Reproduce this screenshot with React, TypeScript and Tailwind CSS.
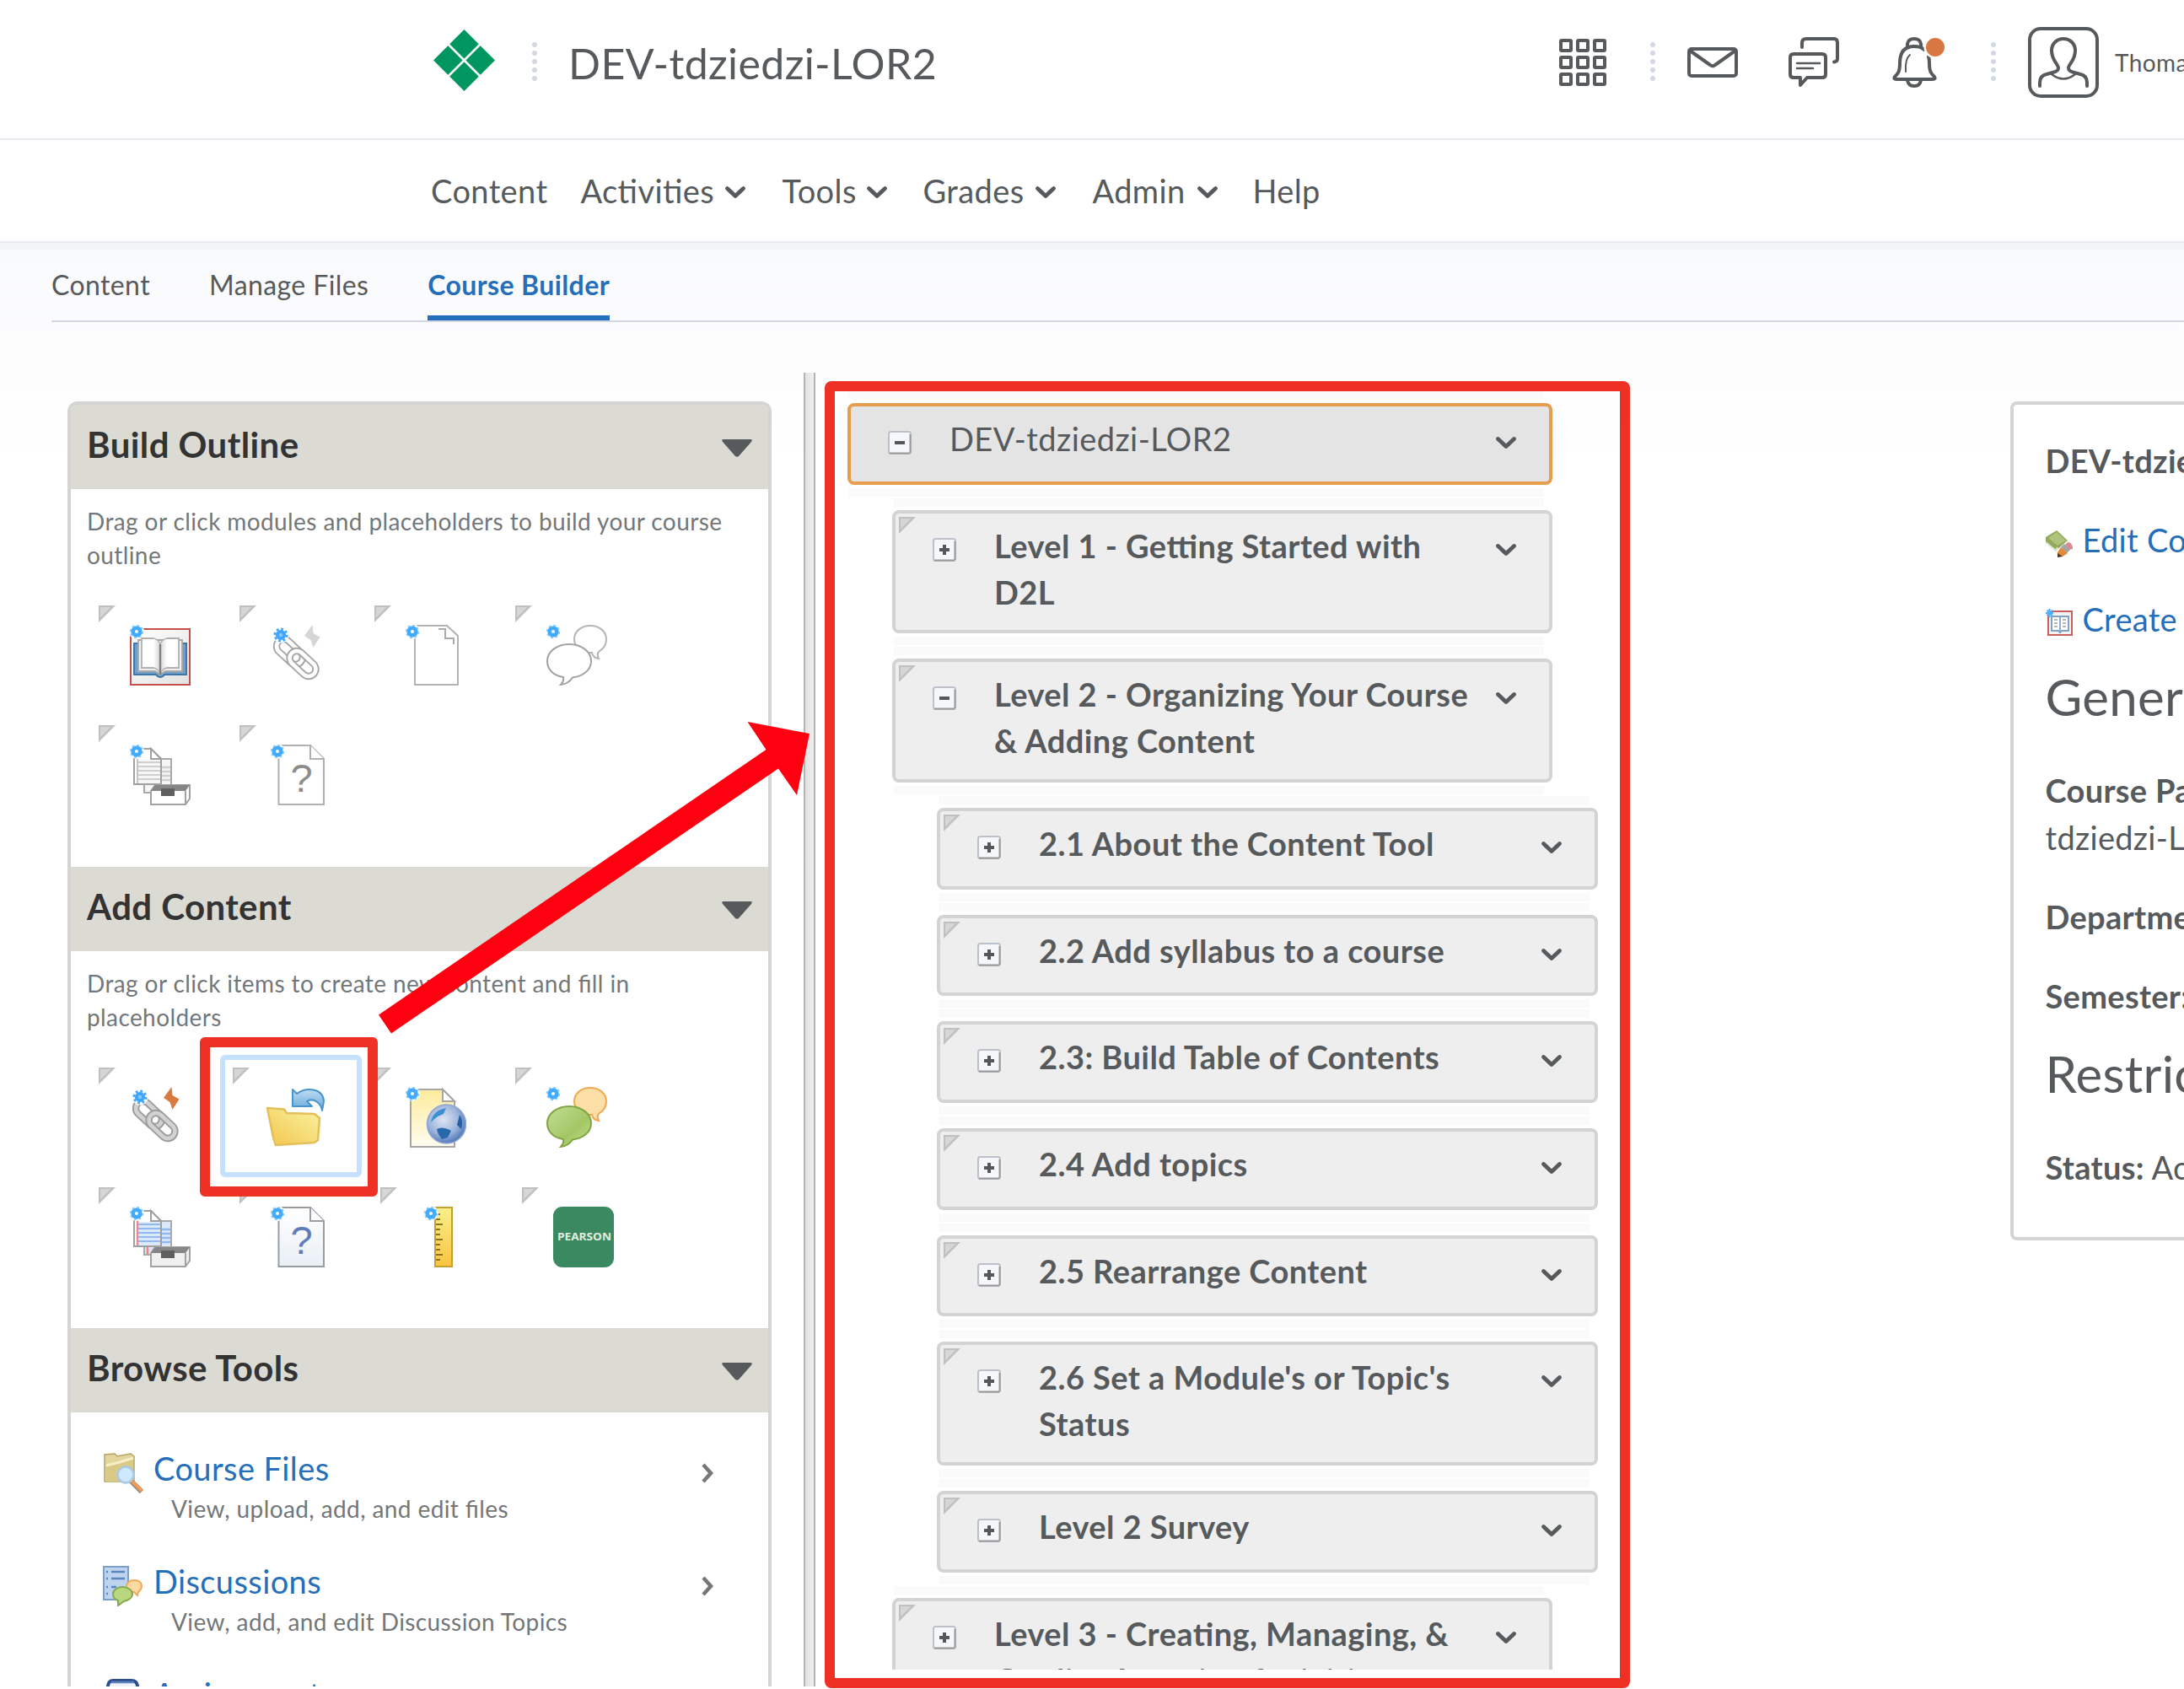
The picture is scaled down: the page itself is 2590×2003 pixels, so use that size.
import type { ReactNode } from "react";

/* ---------- shared glyphs ---------- */

function Chevron({ className = "" }: { className?: string }) {
  return (
    <svg viewBox="0 0 26 16" className={`h-4 w-[26px] shrink-0 ${className}`} fill="none" stroke="#565a5c" strokeWidth="4.800" strokeLinecap="round" strokeLinejoin="round">
      <path d="M3.5 3.5 13 12.5 22.5 3.5" />
    </svg>
  );
}

function Dots() {
  return (
    <div className="flex flex-col gap-1">
      {[0, 1, 2, 3, 4].map((i) => (
        <span key={i} className="h-1.5 w-1.5 rounded-full bg-[#d3d9e3]" />
      ))}
    </div>
  );
}

function Grip({ className = "" }: { className?: string }) {
  return (
    <svg viewBox="0 0 20 20" className={`h-5 w-5 ${className}`}>
      <path d="M0 0H20L0 20Z" fill="#c0c0c0" />
      <path d="M2 2H14.500L2 14.500Z" fill="#d6d6d6" />
    </svg>
  );
}

function Sun({ x = 8, y = 8 }: { x?: number; y?: number }) {
  return (
    <g>
      <circle cx={x} cy={y} r="9" fill="#fff" />
      <circle cx={x} cy={y} r="6.8" fill="#d3ecff" stroke="#8fcfff" strokeWidth="3" strokeDasharray="2.67 2.67" />
      <circle cx={x} cy={y} r="4.3" fill="#fff" stroke="#43abff" strokeWidth="4.600" />
    </g>
  );
}

function Svg72({ children }: { children: ReactNode }) {
  return (
    <svg viewBox="0 0 72 72" className="h-[72px] w-[72px]">
      {children}
    </svg>
  );
}

/* ---------- palette icons ---------- */

function BookIcon() {
  return (
    <Svg72>
      <defs>
        <linearGradient id="bk" x1="0" y1="0" x2="1" y2="1">
          <stop offset="0" stopColor="#fff" />
          <stop offset="1" stopColor="#e2e2e2" />
        </linearGradient>
        <linearGradient id="sp" x1="0" x2="1">
          <stop offset="0" stopColor="#fff" />
          <stop offset=".47" stopColor="#d8d8d8" />
          <stop offset=".5" stopColor="#777" />
          <stop offset=".53" stopColor="#d8d8d8" />
          <stop offset="1" stopColor="#fff" />
        </linearGradient>
      </defs>
      <rect x="1" y="5" width="70" height="66" fill="url(#bk)" stroke="#c4504c" strokeWidth="2" />
      <path d="M5 22H67V59H41Q39 62 36 62T31 59H5Z" fill="#6fa0ca" stroke="#3f76a8" strokeWidth="2" />
      <path d="M10 18H62V55H42L36 59 30 55H10Z" fill="#efefef" stroke="#a9a9a9" strokeWidth="1.8" />
      <path d="M14 16H28Q35 18 36 24 37 18 44 16H58V51H43Q38 52 36 58 34 52 29 51H14Z" fill="#fff" stroke="#b0b0b0" strokeWidth="1.8" />
      <path d="M28 17Q35 19 36 25 37 19 44 17V50Q38 51 36 58 34 51 28 50Z" fill="url(#sp)" />
      <path d="M36 23V59" stroke="#828282" strokeWidth="2.4" />
      <Sun />
    </Svg72>
  );
}

function LinkIcon({ color }: { color?: boolean }) {
  const outer = color ? "#9c9c9c" : "#a6a6a6";
  const inner = color ? "#d2d2d2" : "#ffffff";
  const link = (cx: number, cy: number) => (
    <g transform={`rotate(43 ${cx} ${cy})`} fill="none">
      <rect x={cx - 18} y={cy - 8.5} width="36" height="17" rx="8.5" stroke={outer} strokeWidth="8.400" />
      <rect x={cx - 18} y={cy - 8.5} width="36" height="17" rx="8.5" stroke={inner} strokeWidth="4.600" />
    </g>
  );
  return (
    <Svg72>
      {link(22.5, 32)}
      {link(38, 46)}
      <path d="M49.500 0 40 13 47.500 18 50.500 27 58.500 14.500 50.500 10Z" fill={color ? "#d97b3f" : "#d6d6d6"} />
      <circle cx="12" cy="12" r="9.500" fill="#fff" />
      <circle cx="12" cy="12" r="7" fill="none" stroke="#3fa6ff" strokeWidth="3" strokeDasharray="2.75 2.75" />
      <circle cx="12" cy="12" r="4.200" fill="#8ac8ff" stroke="#3fa6ff" strokeWidth="3.800" />
    </Svg72>
  );
}

function PageIcon() {
  return (
    <Svg72>
      <path d="M11 1H49L62 13V71H11Z" fill="#fff" stroke="#b3b3b3" strokeWidth="2" />
      <path d="M39 5H47V16H57V23" fill="none" stroke="#ababab" strokeWidth="2" />
      <Sun />
    </Svg72>
  );
}

function BubblesIcon({ color }: { color?: boolean }) {
  return (
    <Svg72>
      <defs>
        <linearGradient id="gb" x1="0" y1="0" x2="1" y2="1">
          <stop offset="0" stopColor="#c3dd95" />
          <stop offset=".6" stopColor="#a3c765" />
          <stop offset="1" stopColor="#c9e08f" />
        </linearGradient>
      </defs>
      <path
        d="M52 1C63 1 71 8 71 17 71 23 68 28 63 31Q59 34 62 40 55 39 54 33C43 34 33 27 33 17 33 8 41 1 52 1Z"
        fill={color ? "#fbdfa6" : "#fff"}
        stroke={color ? "#f0a850" : "#b5b5b5"}
        strokeWidth="2"
      />
      <path
        d="M27 23C42 23 53 32 53 43 53 54 43 61 31 62.500Q26 70 17 71 21 67 20 62C8 60 1 53 1 43 1 32 12 23 27 23Z"
        fill={color ? "url(#gb)" : "#fff"}
        stroke={color ? "#7fa643" : "#a2a2a2"}
        strokeWidth="2"
      />
      <Sun />
    </Svg72>
  );
}

function DropboxIcon({ color }: { color?: boolean }) {
  const line = color ? "#90b8f2" : "#cfcfcf";
  const tint = color ? "#dce9fb" : "#f6f6f6";
  return (
    <Svg72>
      <path d="M17 17H49V57H17Z" fill={tint} stroke="#a9a9a9" strokeWidth="2" />
      <path d="M38 27H48M38 32H48M38 37H48M38 42H48" stroke={line} strokeWidth="2.500" />
      {color && <path d="M21 46V56" stroke="#f08080" strokeWidth="2.500" />}
      <path d="M5 5H25L37 17V47H5Z" fill="#fff" stroke="#a0a0a0" strokeWidth="2" />
      <path d="M9 18H36V46H9Z" fill={tint} />
      <path d="M9 21H36M9 26H36M9 31H36M9 36H36M9 41H36" stroke={line} strokeWidth="2" />
      {color ? <path d="M9 15V46" stroke="#f08a8a" strokeWidth="2.500" /> : <path d="M9 15V46" stroke="#b5b5b5" strokeWidth="1.500" />}
      <path d="M25 5V17H37Z" fill="#fff" stroke="#a0a0a0" strokeWidth="2" />
      <path d="M30 48H71V64L66 71H25V55Z" fill={color ? "#f0f0f0" : "#fff"} stroke="#a2a2a2" strokeWidth="2" />
      <path d="M30 48H71L66 55H25Z" fill="#868686" />
      <path d="M66 55V71" stroke="#a2a2a2" strokeWidth="2" />
      <path d="M37 52H53V61H37Z" fill="#5f5f5f" />
      <Sun />
    </Svg72>
  );
}

function QuestionIcon({ color }: { color?: boolean }) {
  return (
    <Svg72>
      <defs>
        <linearGradient id="qp" x1="0" y1="0" x2="0" y2="1">
          <stop offset="0" stopColor="#fff" />
          <stop offset="1" stopColor="#e9eff6" />
        </linearGradient>
      </defs>
      <path d="M9.500 1H47L63 17V71H9.500Z" fill={color ? "url(#qp)" : "#fff"} stroke={color ? "#9a9ca3" : "#b0b0b0"} strokeWidth="2" />
      <path d="M47 1V17H63" fill="#fff" stroke={color ? "#9a9ca3" : "#b0b0b0"} strokeWidth="2" />
      <text x="36.500" y="55.500" textAnchor="middle" fontFamily="Liberation Sans" fontSize="47" letterSpacing="0" fill={color ? "#5f7db8" : "#8c8c8c"}>
        ?
      </text>
      <Sun />
    </Svg72>
  );
}

function FolderIcon() {
  return (
    <Svg72>
      <defs>
        <linearGradient id="fd" x1="1" y1="0" x2="0" y2="1">
          <stop offset="0" stopColor="#f8f2a0" />
          <stop offset="1" stopColor="#f4c64f" />
        </linearGradient>
        <linearGradient id="ar" x1="0" y1="0" x2="0" y2="1">
          <stop offset="0" stopColor="#bcdcf2" />
          <stop offset="1" stopColor="#68a8da" />
        </linearGradient>
      </defs>
      <path d="M34 3 39 8C50 0 70 1 71 17L69 28C67 17 57 13 51 17L57 23H34Z" fill="url(#ar)" stroke="#4795cb" strokeWidth="2" strokeLinejoin="round" />
      <path d="M4 25 24 26.500 27 31 60 32 66 37 64 63 60 66 14 69 11 60Z" fill="url(#fd)" stroke="#e3c05a" strokeWidth="2.500" strokeLinejoin="round" />
    </Svg72>
  );
}

function GlobePageIcon() {
  return (
    <Svg72>
      <defs>
        <linearGradient id="yp" x1="0" y1="0" x2="0" y2="1">
          <stop offset="0" stopColor="#fdeb9c" />
          <stop offset="1" stopColor="#fffdf0" />
        </linearGradient>
        <radialGradient id="gl" cx=".42" cy=".38" r=".65">
          <stop offset="0" stopColor="#dfe5f3" />
          <stop offset=".6" stopColor="#9db4dc" />
          <stop offset="1" stopColor="#4c74b4" />
        </radialGradient>
      </defs>
      <path d="M6 3H44L58 17V71H6Z" fill="url(#yp)" stroke="#a6a6a6" strokeWidth="2" />
      <path d="M44 3V17H58Z" fill="#fff" stroke="#a6a6a6" strokeWidth="2" />
      <circle cx="48.500" cy="44" r="23" fill="url(#gl)" stroke="#8ea6d2" strokeWidth="1.500" />
      <path d="M30 42Q32 28 48 25L45 32 38 35 33 39Z" fill="#3b91cf" />
      <path d="M37 50Q44 46 54 52L50 60 43 62Q38 56 37 50Z" fill="#2869ae" />
      <path d="M64 33Q69 40 66 50L61 45Z" fill="#2361a3" />
      <Sun />
    </Svg72>
  );
}

function RulerIcon() {
  return (
    <Svg72>
      <defs>
        <linearGradient id="rl" x1="0" y1="0" x2="0" y2="1">
          <stop offset="0" stopColor="#f8f08c" />
          <stop offset="1" stopColor="#f9c440" />
        </linearGradient>
      </defs>
      <rect x="28" y="1" width="20" height="70" fill="url(#rl)" stroke="#c4a02f" strokeWidth="2" />
      <path d="M29 9H34M29 15H34M29 21H37M29 27H34M29 33H34M29 39H37M29 45H34M29 51H34M29 57H37M29 63H34" stroke="#8f7420" strokeWidth="1.800" />
      <Sun x={23} />
    </Svg72>
  );
}

function PearsonIcon() {
  return (
    <Svg72>
      <rect width="72" height="72" rx="11" fill="#3b8961" />
      <text x="5" y="40" fontFamily="Open Sans" fontWeight="700" fontSize="13" letterSpacing="0" textLength="64" lengthAdjust="spacingAndGlyphs" fill="#e2efe0">
        PEARSON
      </text>
    </Svg72>
  );
}

/* ---------- sidebar ---------- */

function PanelHeader({ title }: { title: string }) {
  return (
    <div className="flex h-[100px] items-center justify-between bg-[#dbdbd3] pr-[19px] pl-[19px]">
      <h2 className="-mt-1.5 text-[42px] font-bold text-[#333]">{title}</h2>
      <svg viewBox="0 0 36 21" className="mt-0.5 h-[21px] w-9">
        <path d="M2 0H34Q37 0 35 3L20 20Q18 21.500 16 20L1 3Q-1 0 2 0Z" fill="#565a5c" />
      </svg>
    </div>
  );
}

function Tile({ width, children }: { width: string; children: ReactNode }) {
  return (
    <div className={`flex shrink-0 ${width}`}>
      <Grip className="shrink-0" />
      <div className="-mr-5 ml-[17px] pt-[23px]">{children}</div>
    </div>
  );
}

function ToolRow({ icon, title, sub }: { icon: ReactNode; title: string; sub: string }) {
  return (
    <div className="relative flex h-[134px] shrink-0 items-start pl-[38px]">
      <div className="mt-2.5 h-12 w-12 shrink-0">{icon}</div>
      <div className="ml-3 flex-1">
        <div className="text-[38px] leading-[56px] text-[#256fba]">{title}</div>
        <div className="pl-[21px] text-[28px] leading-10 text-[#72777a]">{sub}</div>
      </div>
      <svg viewBox="0 0 16 24" className="mt-[22px] mr-16 h-6 w-4" fill="none" stroke="#777" strokeWidth="4.500">
        <path d="M3 2 12 12 3 22" />
      </svg>
    </div>
  );
}

function CourseFilesIcon() {
  return (
    <svg viewBox="0 0 48 48" className="h-12 w-12">
      <path d="M2 2 14 1 17 4 33 1 37 4V34H2Z" fill="#e3d69c" stroke="#b5a466" strokeWidth="1.500" />
      <path d="M4 15 20 11 36 5V20L26 34H4Z" fill="#d9c987" />
      <path d="M4 15 20 11 36 6" fill="none" stroke="#f7efc6" strokeWidth="3" />
      <path d="M33 33 46 46" stroke="#8a8a8a" strokeWidth="6" />
      <path d="M34 33 46 45" stroke="#f39a55" strokeWidth="4" />
      <circle cx="27" cy="26" r="9.500" fill="#cfe8fb" stroke="#a9c9e4" strokeWidth="2.500" />
    </svg>
  );
}

function DiscussionsIcon() {
  return (
    <svg viewBox="0 0 48 48" className="h-12 w-12">
      <path d="M1 1H30V40H1Z" fill="#bdd3ee" stroke="#7d9fcc" strokeWidth="2" />
      <path d="M4 7H6M10 7H26M4 15H6M10 15H26M4 25H6M10 25H16M4 33H6" stroke="#5b86bf" strokeWidth="2.500" />
      <path d="M37 17C43 17 46 20 46 24 46 28 43 30 42 31L41 35 37 31C31 31 28 28 28 24 28 20 32 17 37 17Z" fill="#fcd9a0" stroke="#f0aa5a" strokeWidth="2" />
      <path d="M23 25C30 25 35 29 35 33 35 38 30 41 25 42L18 47V41C14 40 12 37 12 33 12 29 17 25 23 25Z" fill="#b9d77f" stroke="#86a94b" strokeWidth="2" />
    </svg>
  );
}

function AssignmentsIcon() {
  return (
    <svg viewBox="0 0 48 48" className="h-12 w-12">
      <path d="M6 40V8Q7 2 12 2H34Q40 2 41 8V40Z" fill="#eef2f8" stroke="#2d4f8c" strokeWidth="4" />
      <path d="M10 4H37" stroke="#5f83bd" strokeWidth="2.500" />
    </svg>
  );
}

function Sidebar() {
  return (
    <aside className="mt-[34px] ml-20 flex h-[1560px] w-[835px] shrink-0 flex-col overflow-hidden rounded-t-xl border-4 border-b-0 border-[#d4d4d4] bg-white">
      <section className="h-[548px] shrink-0">
        <PanelHeader title="Build Outline" />
        <p className="mt-[18px] px-[19px] text-[28px] leading-10 text-[#72777a]">
          Drag or click modules and placeholders to build your course outline
        </p>
        <div className="mt-10 ml-[33px] flex h-[142px]">
          <Tile width="w-[167px]"><BookIcon /></Tile>
          <Tile width="w-[160px]"><LinkIcon /></Tile>
          <Tile width="w-[167px]"><PageIcon /></Tile>
          <Tile width="w-[167px]"><BubblesIcon /></Tile>
        </div>
        <div className="ml-[33px] flex">
          <Tile width="w-[167px]"><DropboxIcon /></Tile>
          <Tile width="w-[167px]"><QuestionIcon /></Tile>
        </div>
      </section>
      <section className="h-[547px] shrink-0">
        <PanelHeader title="Add Content" />
        <p className="mt-[18px] pr-[120px] pl-[19px] text-[28px] leading-10 text-[#72777a]">
          Drag or click items to create new content and fill in placeholders
        </p>
        <div className="mt-10 ml-[33px] flex h-[142px]">
          <Tile width="w-[159px]"><LinkIcon color /></Tile>
          <div className="relative">
            <div className="absolute -top-[15px] -left-[15px] h-[145px] w-[168px] rounded-md border-[6px] border-[#c6e0ff]" />
            <div className="absolute -top-9 -left-[39px] z-10 h-[189px] w-[211px] rounded-md border-[12px] border-[#ee3124]" />
            <Tile width="w-[168px]"><FolderIcon /></Tile>
          </div>
          <Tile width="w-[167px]"><GlobePageIcon /></Tile>
          <Tile width="w-[167px]"><BubblesIcon color /></Tile>
        </div>
        <div className="ml-[33px] flex">
          <Tile width="w-[167px]"><DropboxIcon color /></Tile>
          <Tile width="w-[167px]"><QuestionIcon color /></Tile>
          <Tile width="w-[168px]"><RulerIcon /></Tile>
          <Tile width="w-[167px]"><PearsonIcon /></Tile>
        </div>
      </section>
      <section>
        <PanelHeader title="Browse Tools" />
        <div className="mt-[38px]">
          <ToolRow icon={<CourseFilesIcon />} title="Course Files" sub="View, upload, add, and edit files" />
          <ToolRow icon={<DiscussionsIcon />} title="Discussions" sub="View, add, and edit Discussion Topics" />
          <ToolRow icon={<AssignmentsIcon />} title="Assignments" sub="View, add, and edit assignments" />
        </div>
      </section>
    </aside>
  );
}

/* ---------- course tree ---------- */

type Node = { text: string; level: 0 | 1 | 2; open?: boolean; tall?: boolean };

const NODES: Node[] = [
  { text: "DEV-tdziedzi-LOR2", level: 0, open: true },
  { text: "Level 1 - Getting Started with D2L", level: 1, tall: true },
  { text: "Level 2 - Organizing Your Course & Adding Content", level: 1, open: true, tall: true },
  { text: "2.1 About the Content Tool", level: 2 },
  { text: "2.2 Add syllabus to a course", level: 2 },
  { text: "2.3: Build Table of Contents", level: 2 },
  { text: "2.4 Add topics", level: 2 },
  { text: "2.5 Rearrange Content", level: 2 },
  { text: "2.6 Set a Module's or Topic's Status", level: 2, tall: true },
  { text: "Level 2 Survey", level: 2 },
  { text: "Level 3 - Creating, Managing, & Grading Learning Activities", level: 1, tall: true },
];

const INDENT = { 0: "ml-0 w-[836px]", 1: "ml-[53px] w-[783px]", 2: "ml-[106px] w-[784px]" };

function Fold({ open }: { open?: boolean }) {
  return (
    <svg viewBox="0 0 28 28" className="h-7 w-7 shrink-0">
      <rect x="1" y="1" width="26" height="26" rx="2.500" fill="#f5f7fa" stroke="#bcc0c8" strokeWidth="2" />
      <path d="M2 26.500H26M26.500 4V26" stroke="#9a9a9a" strokeWidth="2" />
      <path d="M8 14H20" stroke="#55585a" strokeWidth="4" />
      {!open && <path d="M14 8V20" stroke="#55585a" strokeWidth="4" />}
    </svg>
  );
}

function TreeNode({ node }: { node: Node }) {
  const root = node.level === 0;
  return (
    <div className={`py-px ${INDENT[node.level]}`}>
      <div className="mr-2.5 mb-1 ml-0.5 h-2.5 bg-[#fafafa]" />
      <div
        className={`relative flex items-start rounded-lg border-4 ${node.tall ? "h-[146.6px]" : "h-[96.7px]"} ${
          root ? "border-[#e69d4d] bg-[#e4e4e4]" : "border-[#d3d3d3] bg-[#eee]"
        }`}
      >
        {!root && <Grip className="absolute top-1 left-1" />}
        <div className="mt-[29px] ml-[44px]">
          <Fold open={node.open} />
        </div>
        <div className={`mt-[11px] ml-[45px] w-[580px] text-[38px] leading-[55px] tracking-[0.44px] ${root ? "" : "font-bold"}`}>{node.text}</div>
        <Chevron className="mt-[35px] mr-[38.5px] ml-auto" />
      </div>
      <div className="mt-1 mr-2.5 ml-0.5 h-2.5 bg-[#fafafa]" />
    </div>
  );
}

/* ---------- details panel ---------- */

function Details() {
  return (
    <aside className="mt-[34px] ml-auto h-[995px] w-[206px] shrink-0 overflow-hidden rounded-l-lg border-4 border-r-0 border-[#d4d4d4] bg-white pt-[38px] pl-[37.5px] text-[38px] leading-[56px] tracking-[0.3px] whitespace-nowrap">
      <p className="mb-[38px] font-bold">DEV-tdziedzi-LOR2</p>
      <p className="mb-[38px] flex items-center text-[#256fba]">
        <svg viewBox="0 0 32 32" className="mt-2.5 mr-3 h-8 w-8 shrink-0">
          <path d="M0 8 13 0 26 12 12 24 0 14Z" fill="#93aa5c" />
          <path d="M3 9 13 2 24 12 14 18Z" fill="#aec37c" />
          <path d="M0 14 12 24 14 20" fill="none" stroke="#dfe6c8" strokeWidth="2" />
          <path d="M26 14Q32 14 32 22L28 23 23 17Z" fill="#d98a90" />
          <path d="M22 16 29 23 25 27 18 20Z" fill="#a4a4a8" />
          <path d="M18 20 26 27 20 31 14 31 14 26Z" fill="#e08a3c" />
          <path d="M14 27 20 31 14 32Z" fill="#4a3420" />
        </svg>
        Edit Course
      </p>
      <p className="flex items-center text-[#256fba]">
        <svg viewBox="0 0 32 32" className="mt-2 mr-3 h-8 w-8 shrink-0">
          <rect x="3" y="3" width="28" height="28" fill="#f3f3f5" stroke="#c9605e" strokeWidth="2" />
          <path d="M7 9H27V26H19L17 28 15 26H7Z" fill="#fff" stroke="#7fa3c4" strokeWidth="2" />
          <path d="M17 10V26" stroke="#8fb0cc" strokeWidth="2" />
          <path d="M10 13H14M10 17H14M10 21H14M20 13H24M20 17H24M20 21H24" stroke="#a0a0a0" strokeWidth="1.500" />
          <path d="M4.500 0V10M0 5H9M1.500 1.500 8 8M8 1.500 1.500 8" stroke="#52b2f7" strokeWidth="2" />
        </svg>
        Create
      </p>
      <h3 className="mt-9 mb-[55px] text-[60px]">General</h3>
      <p className="mb-[38px]">
        <b>Course Path:</b>
        <br />
        tdziedzi-LOR2
      </p>
      <p className="mb-[38px] font-bold">Department:</p>
      <p className="font-bold">Semester:</p>
      <h3 className="mt-9 mb-[55px] text-[60px]">Restrictions</h3>
      <p>
        <b>Status:</b> Active
      </p>
    </aside>
  );
}

/* ---------- header ---------- */

function Header() {
  return (
    <header className="flex h-[166px] items-start border-b-2 border-[#e6eaee] bg-white pl-[514px]">
      <svg viewBox="0 0 74 74" className="mt-[35px] h-[73px] w-[73px] shrink-0">
        <path d="M37 0 74 37 37 74 0 37Z" fill="#009660" />
        <path d="M17.500 17.500 56.500 56.500M56.500 17.500 17.500 56.500" stroke="#fff" strokeWidth="2.600" />
      </svg>
      <div className="mt-[50px] ml-[44px]"><Dots /></div>
      <h1 className="mt-[45px] ml-[37px] text-[50px] leading-[60px]">DEV-tdziedzi-LOR2</h1>
      <div className="ml-auto flex h-[148px] w-[741px] shrink-0 items-center">
        <div className="grid w-14 shrink-0 grid-cols-3 gap-1">
          {Array.from({ length: 9 }, (_, i) => (
            <span key={i} className="h-4 w-4 rounded-[3px] border-4 border-[#565a5c]" />
          ))}
        </div>
        <div className="-mt-0.5 ml-[52px]"><Dots /></div>
        <svg viewBox="0 0 60 36" className="ml-[38px] h-9 w-[60px] shrink-0" fill="none" stroke="#565a5c" strokeWidth="4" strokeLinejoin="round">
          <rect x="2" y="2" width="56" height="32" rx="3" />
          <path d="M3 4 27 21Q30 23.500 33 21L57 4" />
        </svg>
        <svg viewBox="0 0 60 60" className="ml-[60px] h-[60px] w-[60px] shrink-0" fill="none" stroke="#565a5c" strokeWidth="4" strokeLinejoin="round" strokeLinecap="round">
          <path d="M16 12V7Q16 2 21 2H54Q58 2 58 7V26Q58 29 54 29.500" />
          <path d="M6 20H40Q44 20 44 24V44Q44 48 40 48H22L14 57V48H6Q2 48 2 44V24Q2 20 6 20Z" />
          <path d="M10 31H37M10 37H29" strokeWidth="2.500" />
        </svg>
        <svg viewBox="0 0 66 60" className="ml-[63px] h-[60px] w-[66px] shrink-0" fill="none" stroke="#565a5c" strokeWidth="4" strokeLinecap="round" strokeLinejoin="round">
          <path d="M18 12V8Q19 2 26 2T34 8V12" />
          <path d="M26 11C14 11 9 19 9 31 9 41 7 43 3 47Q1 50 5 50H48Q52 50 50 47C46 43 44 41 44 31 44 28 44 26 43 23" />
          <path d="M18 51Q19 58 26 58T34 51" />
          <path d="M21 21Q15 26 16 41" strokeWidth="2" />
          <path d="M26 11Q34 11 38 15" />
          <circle cx="51" cy="12" r="13.500" fill="#fff" stroke="none" />
          <circle cx="51" cy="12" r="11" fill="#d97740" stroke="none" />
        </svg>
        <div className="-mt-0.5 ml-[51px]"><Dots /></div>
        <svg viewBox="0 0 84 84" className="ml-[38px] h-[84px] w-[84px] shrink-0" fill="none" stroke="#565a5c" strokeWidth="4" strokeLinecap="round">
          <rect x="2" y="2" width="80" height="80" rx="13" />
          <path d="M14 70V66C14 60 17 57 22 56L31 53.500Q36 52 36 48.500C36 44 28 40 28 28 28 20 34 14 42 14S56 20 56 28C56 40 48 44 48 48.500Q48 52 53 53.500L62 56C67 57 70 60 70 66V70" />
          <path d="M28 56Q42 67 56 56" strokeWidth="2.500" />
        </svg>
        <span className="ml-[19px] text-[28px]">Thomas</span>
      </div>
    </header>
  );
}

function NavMenu({ label, className }: { label: string; className: string }) {
  return (
    <div className={`flex items-center justify-between ${className}`}>
      <span>{label}</span>
      <Chevron className="mt-1" />
    </div>
  );
}

export default function App() {
  return (
    <div className="relative h-[2003px] w-[2590px] overflow-hidden bg-white font-[Lato,sans-serif] tracking-[0.4px] text-[#565a5c] [font-feature-settings:'liga'_1]">
      <Header />
      <nav className="flex h-[122px] items-center border-b-2 border-[#e6eaee] bg-white pl-[511px] text-[38px]">
        <span>Content</span>
        <NavMenu label="Activities" className="ml-[39px] w-[197px]" />
        <NavMenu label="Tools" className="ml-[42px] w-[126px]" />
        <NavMenu label="Grades" className="ml-[41px] w-[159px]" />
        <NavMenu label="Admin" className="ml-[42px] w-[150px]" />
        <span className="ml-10">Help</span>
      </nav>
      <div className="h-2 bg-[#f2f4f6]" />
      <main className="h-[1707px] bg-linear-to-b from-[#f9fafc] to-white to-[250px]">
        <div className="ml-[61px] flex h-[86px] gap-[70px] border-b-2 border-[#d3d9e3] text-[32px] leading-[48px]">
          <span className="pt-[18px]">Content</span>
          <span className="pt-[18px]">Manage Files</span>
          <span className="border-b-[6px] border-[#256fba] pt-[18px] font-bold text-[#256fba]">Course Builder</span>
        </div>
        <div className="mt-[60px] flex h-[1558px] overflow-hidden">
          <Sidebar />
          <div className="ml-[38px] w-3.5 shrink-0 border-x-2 border-[#b4b4b4] bg-linear-to-r from-[#e2e2e2] to-[#f0f0f0]" />
          <div className="mt-[21px] ml-[38px] h-[1517px] w-[900px] shrink-0 overflow-hidden">
            {NODES.map((n) => (
              <TreeNode key={n.text} node={n} />
            ))}
          </div>
          <Details />
        </div>
      </main>
      <div className="absolute top-[452px] left-[978px] h-[1550px] w-[955px] rounded-lg border-[12px] border-[#ee3124]" />
      <svg viewBox="440 850 530 380" className="absolute top-[850px] left-[440px] h-[380px] w-[530px]">
        <path d="M449 1203.500 908.500 889 886.500 856 960 870 945 943 923 911.500 464 1225.500Z" fill="#ff0010" />
      </svg>
    </div>
  );
}
